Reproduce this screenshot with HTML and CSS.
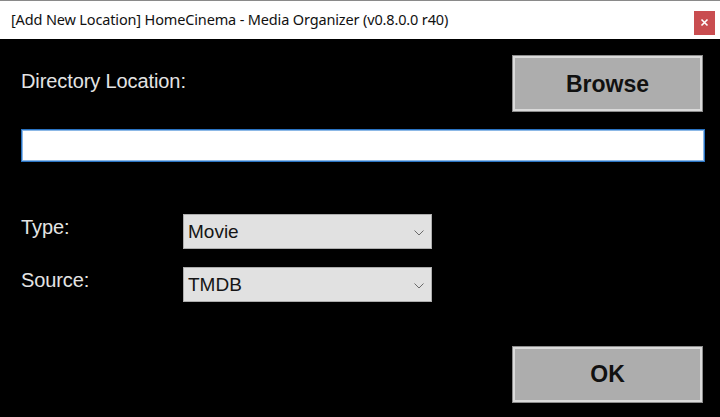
FILE: index.html
```html
<!DOCTYPE html>
<html>
<head>
<meta charset="utf-8">
<link rel="stylesheet" href="styles.css">
</head>
<body>
<div class="window">
  <div class="titlebar">
    <span class="title">[Add New Location] HomeCinema - Media Organizer (v0.8.0.0 r40)</span>
    <button class="close" aria-label="Close">
      <svg width="9" height="9" viewBox="0 0 9 9"><path d="M1.5 1.5 L7.5 7.5 M7.5 1.5 L1.5 7.5" stroke="#fff" stroke-width="1.6" fill="none"/></svg>
    </button>
  </div>
  <div class="content">
    <div class="row-top">
      <span class="label label-dir">Directory Location:</span>
      <button class="btn btn-browse">Browse</button>
    </div>
    <div class="input"></div>
    <div class="field field-type">
      <span class="label label-field">Type:</span>
      <div class="select"><span>Movie</span>
        <svg class="chev" width="10" height="6" viewBox="0 0 10 6"><path d="M0.5 0.5 L5 5 L9.5 0.5" stroke="#6a6a6a" stroke-width="1" fill="none"/></svg>
      </div>
    </div>
    <div class="field field-source">
      <span class="label label-field">Source:</span>
      <div class="select"><span>TMDB</span>
        <svg class="chev" width="10" height="6" viewBox="0 0 10 6"><path d="M0.5 0.5 L5 5 L9.5 0.5" stroke="#6a6a6a" stroke-width="1" fill="none"/></svg>
      </div>
    </div>
    <div class="row-bottom">
      <button class="btn">OK</button>
    </div>
  </div>
</div>
</body>
</html>
```
FILE: styles.css
```css
html, body {
  margin: 0;
  padding: 0;
  background: #000;
  width: 720px;
  height: 417px;
  overflow: hidden;
}
.window {
  width: 720px;
  height: 417px;
  display: flex;
  flex-direction: column;
}
.titlebar {
  height: 38px;
  border-top: 1px solid #8a8a8a;
  background: #fff;
  display: flex;
  align-items: center;
  justify-content: space-between;
  padding-left: 11px;
  padding-right: 5px;
  flex: none;
}
.title {
  font-family: "Noto Sans", "Open Sans", sans-serif;
  font-size: 14.5px;
  color: #111;
  letter-spacing: -0.15px;
  margin-top: -2px;
}
.close {
  width: 21px;
  height: 24px;
  border: none;
  padding: 0;
  background: #c94d50;
  display: flex;
  align-items: center;
  justify-content: center;
  margin-top: 5px;
}
.content {
  padding: 16px 17px 0 21px;
  display: flex;
  flex-direction: column;
}
.label {
  font-family: "Liberation Sans", Arial, sans-serif;
  font-size: 20px;
  line-height: 20px;
  color: #e4e4e4;
  letter-spacing: -0.1px;
}
.row-top {
  display: flex;
  justify-content: space-between;
  align-items: flex-start;
}
.label-dir {
  margin-top: 16px;
}
.btn {
  width: 191px;
  height: 57px;
  border: 1px solid #8c8c8c;
  box-shadow: inset 0 0 0 2px #dadada;
  background: #adadad;
  font-family: "Liberation Sans", Arial, sans-serif;
  font-weight: bold;
  font-size: 23px;
  color: #111;
  padding: 0;
  margin: 0;
}
.btn-browse {
  padding-top: 2px;
}
.input {
  margin-top: 17px;
  height: 31px;
  width: 682px;
  background: #fff;
  border: 1px solid #2a73c2;
  box-shadow: inset 0 0 0 1px #8cb8e6;
}
.field {
  display: flex;
  align-items: flex-start;
}
.field-type { margin-top: 52px; }
.field-source { margin-top: 18px; }
.label-field {
  width: 162px;
  margin-top: 3px;
}
.select {
  width: 236px;
  height: 33px;
  background: #e1e1e1;
  border: 1px solid #adadad;
  display: flex;
  align-items: center;
  justify-content: space-between;
  padding: 0 7px 0 4px;
  box-sizing: content-box;
  font-family: "Liberation Sans", Arial, sans-serif;
  font-size: 19px;
  color: #151515;
}
.select span {
  margin-top: 1px;
}
.chev {
  margin-top: 2px;
}
.row-bottom {
  display: flex;
  justify-content: flex-end;
  margin-top: 44px;
}
```
